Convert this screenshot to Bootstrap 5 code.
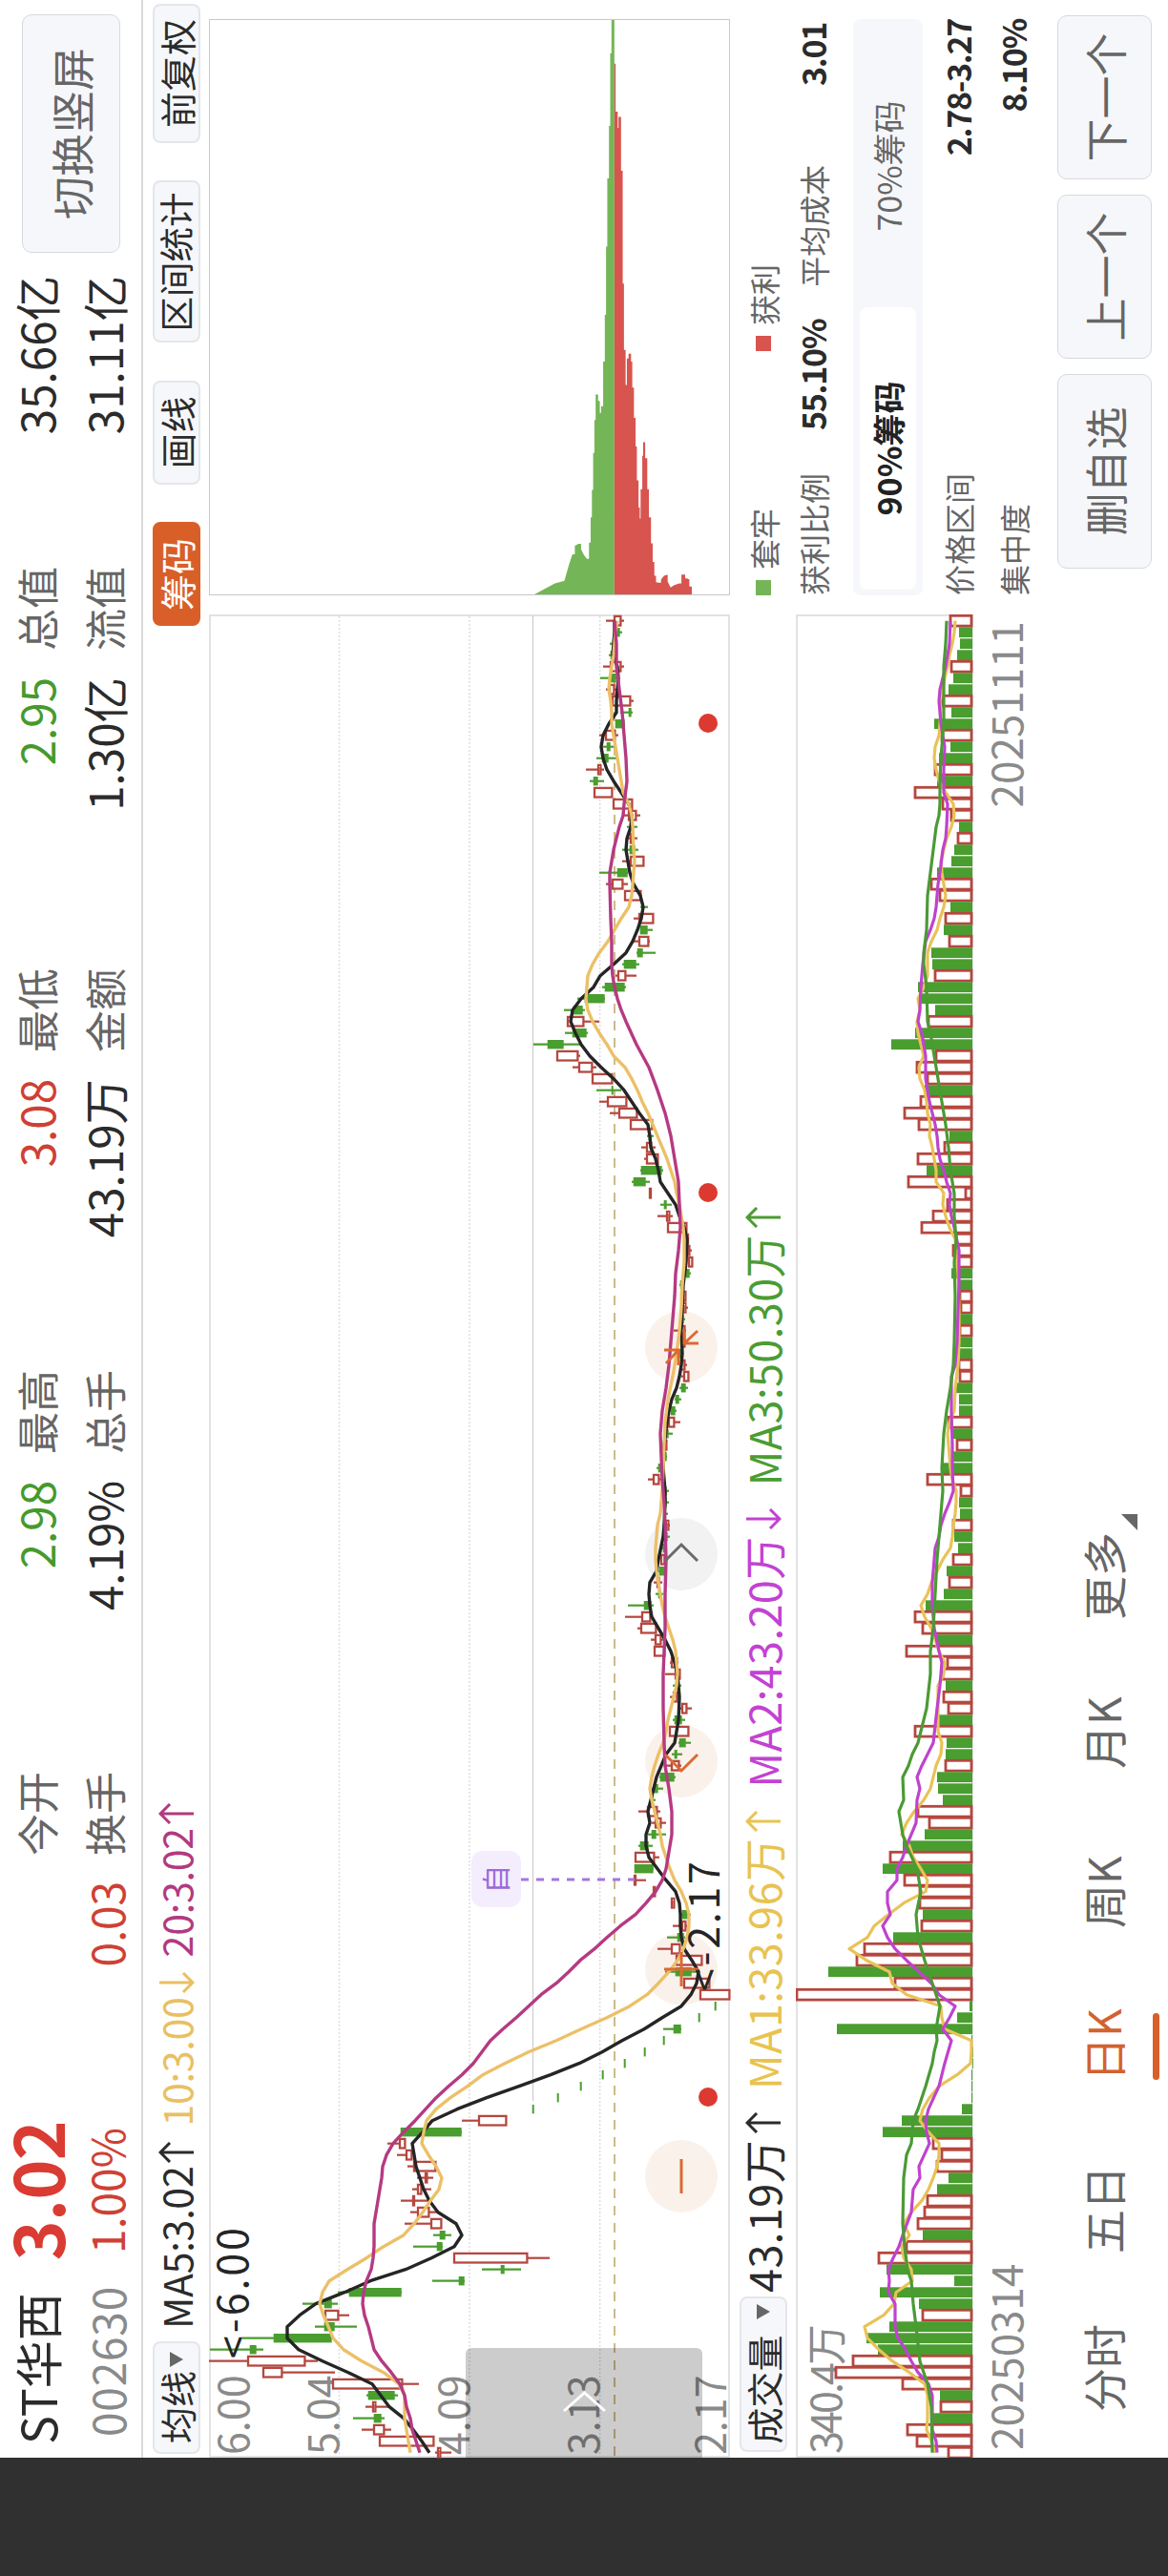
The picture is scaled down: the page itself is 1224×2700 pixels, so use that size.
<!DOCTYPE html>
<html lang="zh-CN">
  <head>
    <meta charset="UTF-8" />
    <meta name="viewport" content="width=device-width, initial-scale=1.0" />
    <title>ST华西 002630 - 日K</title>
    <link
      href="https://cdn.jsdelivr.net/npm/bootstrap@5.3.0/dist/css/bootstrap.min.css"
      rel="stylesheet"
    />
    <style>
      body {
        font-family: "Noto Sans CJK SC", "Noto Sans", sans-serif;
        color: #2b2b2b;
        background-color: #fff;
      }
      /* phone held sideways: the landscape page is turned a quarter to the left */
      .phone {
        width: 1224px;
        height: 2700px;
        overflow: hidden;
      }
      .landscape {
        width: 2700px;
        height: 1224px;
        transform-origin: 0 0;
        transform: rotate(-90deg) translateX(-2700px);
        background-color: #fff;
        line-height: 1;
      }
      .cutout {
        width: 124px;
        background-color: #303030;
      }
      .page {
        width: 2576px;
      }
      .up {
        color: #cf4034;
      }
      .down {
        color: #469a2c;
      }
      .muted {
        color: #666;
      }

      /* header */
      .quote {
        height: 150px;
        padding-top: 2px;
        border-bottom: 2px solid #dadada;
      }
      .quote-line {
        height: 71px;
      }
      .stock-id {
        width: 183px;
      }
      .stock-name {
        font-size: 50px;
        padding-left: 14px;
      }
      .stock-code {
        font-size: 46px;
        padding: 6px 0 0 22px;
        letter-spacing: 0.8px;
        color: #8a8a8a;
      }
      .price-col {
        width: 194px;
        text-align: center;
      }
      .price {
        font-size: 71px;
        font-weight: 700;
        color: #da3b32;
        letter-spacing: -0.6px;
      }
      .pct {
        font-size: 46px;
        padding-top: 5px;
      }
      .change-col {
        width: 230px;
        padding-right: 3px;
        text-align: right;
      }
      .stat {
        width: 421px;
        padding: 0 4px 0 24px;
        font-size: 44px;
      }
      .stat .num {
        font-size: 47.5px;
      }
      .soft-btn {
        background-color: #f6f7fa;
        border: 1px solid #d6d9dd;
        border-radius: 10px;
        color: #666;
        font-size: 45px;
        line-height: 1;
        padding: 0;
      }
      .rotate-btn {
        width: 250px;
        height: 103px;
        margin: 21px 0 0 20px;
      }

      /* toolbar */
      .tools {
        height: 69px;
        padding: 0 4px;
      }
      .pill {
        height: 50px;
        font-size: 38px;
        line-height: 1;
        padding: 0;
        border: 2px solid #e3e6ea;
        border-radius: 8px;
        background-color: #f6f7fa;
        color: #2b2b2b;
      }
      .pill.active {
        background-color: #d85f27;
        border-color: #d85f27;
        color: #fff;
      }
      .w-ma { width: 118px; }
      .w-2 { width: 109px; }
      .w-3 { width: 146px; }
      .w-4 { width: 170px; font-size: 36.5px; }
      .w-vol { width: 163px; }
      .ma-text {
        font-size: 41px;
        letter-spacing: -0.2px;
        margin-left: 13px;
      }
      .c5 { color: #2b2b2b; }
      .c10 { color: #e9bf62; }
      .c20 { color: #b23a80; }
      .v1 { color: #e8c350; }
      .v2 { color: #c242d2; }
      .v3 { color: #4b9c33; }
      .caret {
        width: 16px;
        height: 20px;
      }
      .arrow {
        width: 22px;
        height: 38px;
      }

      /* charts */
      .left-col {
        width: 1932px;
      }
      .right-col {
        width: 604px;
        margin-left: 20px;
      }
      .k-chart {
        height: 546px;
        overflow: visible;
      }
      .vol-head {
        height: 69px;
        padding-left: 6px;
      }
      .vol-text {
        font-size: 45px;
        letter-spacing: 0.45px;
      }
      .vol-text .arrow {
        margin-left: 7px;
      }
      .dates {
        padding: 11px 7px 0 8px;
        font-size: 44px;
        color: #8a8a8a;
      }

      /* chips panel */
      .chips {
        border: 1px solid #c8c8c8;
        height: 546px;
      }
      .side-text {
        font-size: 32px;
        color: #666;
      }
      .side-num {
        font-size: 34px;
        font-weight: 700;
        color: #2b2b2b;
        letter-spacing: -1.3px;
      }
      .dot-sq {
        width: 16px;
        height: 16px;
        margin-right: 11px;
      }
      .seg {
        height: 73px;
        padding: 7px 6px;
        background-color: #f6f7fa;
        border-radius: 8px;
        font-size: 34px;
        color: #666;
      }
      .seg-on {
        background-color: #fff;
        border-radius: 8px;
        color: #222;
        font-weight: 700;
      }

      /* bottom bar */
      .bottom-bar {
        height: 116px;
        padding: 0 16px 0 48px;
      }
      .period {
        font-size: 46px;
        color: #666;
        height: 107px;
        padding-bottom: 13px;
      }
      .period.on {
        color: #d2622f;
      }
      .period.on::after {
        content: "";
        position: absolute;
        left: 1px;
        right: 5px;
        bottom: 0;
        height: 7px;
        border-radius: 4px;
        background-color: #d85f27;
      }
      .more-tri {
        position: absolute;
        right: -19px;
        bottom: 23px;
      }
      .nav-btn {
        height: 99px;
        width: 172px;
      }
      .nav-btn.wide {
        width: 204px;
      }
    </style>
  </head>
  <body>
    <svg class="d-none">
      <symbol id="arrow-up" viewBox="0 0 22 38">
        <path d="M11 37V2M1 12L11 2l10 10" fill="none" stroke="currentColor" stroke-width="3" />
      </symbol>
      <symbol id="arrow-down" viewBox="0 0 22 38">
        <path d="M11 1v35M1 26l10 10 10-10" fill="none" stroke="currentColor" stroke-width="3" />
      </symbol>
      <symbol id="caret" viewBox="0 0 16 14">
        <path d="M0 0h16L8 14z" fill="#666" />
      </symbol>
    </svg>

    <div class="phone">
      <div class="landscape d-flex">
        <div class="cutout flex-shrink-0"></div>
        <div class="page d-flex flex-column">
          <header class="quote d-flex flex-shrink-0">
            <div>
              <div class="quote-line d-flex align-items-center">
                <div class="stock-id stock-name text-nowrap">ST华西</div>
                <div class="price-col price">3.02</div>
                <div class="change-col"></div>
              </div>
              <div class="quote-line d-flex align-items-center">
                <div class="stock-id stock-code">002630</div>
                <div class="price-col pct up">1.00%</div>
                <div class="change-col pct up">0.03</div>
              </div>
            </div>
            <div id="stats" class="d-flex"></div>
            <button class="btn soft-btn rotate-btn">切换竖屏</button>
          </header>

          <div class="tools d-flex align-items-center flex-shrink-0">
            <button class="btn pill w-ma d-flex align-items-center justify-content-center gap-1">
              均线<svg class="caret"><use href="#caret" /></svg>
            </button>
            <div class="ma-text d-flex align-items-center text-nowrap">
              <span class="c5 d-flex align-items-center">MA5:3.02<svg class="arrow ms-1"><use href="#arrow-up" /></svg></span>
              <span class="c10 d-flex align-items-center ms-3">10:3.00<svg class="arrow ms-1"><use href="#arrow-down" /></svg></span>
              <span class="c20 d-flex align-items-center ms-3">20:3.02<svg class="arrow ms-1"><use href="#arrow-up" /></svg></span>
            </div>
            <div class="d-flex ms-auto" style="gap: 39.5px">
              <button class="btn pill active w-2">筹码</button>
              <button class="btn pill w-2">画线</button>
              <button class="btn pill w-4">区间统计</button>
              <button class="btn pill w-3">前复权</button>
            </div>
          </div>

          <div class="d-flex flex-grow-1">
            <div class="left-col">
              <svg id="kChart" class="k-chart d-block" width="1932" height="546"></svg>
              <div class="vol-head d-flex align-items-center">
                <button class="btn pill w-vol d-flex align-items-center justify-content-center gap-3">
                  成交量<svg class="caret"><use href="#caret" /></svg>
                </button>
                <div class="vol-text d-flex align-items-center text-nowrap">
                  <span class="d-flex align-items-center ms-1">43.19万<svg class="arrow"><use href="#arrow-up" /></svg></span>
                  <span class="v1 d-flex align-items-center ms-4">MA1:33.96万<svg class="arrow"><use href="#arrow-up" /></svg></span>
                  <span class="v2 d-flex align-items-center ms-4">MA2:43.20万<svg class="arrow"><use href="#arrow-down" /></svg></span>
                  <span class="v3 d-flex align-items-center ms-4">MA3:50.30万<svg class="arrow"><use href="#arrow-up" /></svg></span>
                </div>
              </div>
              <svg id="vChart" class="d-block" width="1932" height="186"></svg>
              <div class="dates d-flex justify-content-between">
                <span>20250314</span><span>20251111</span>
              </div>
            </div>

            <div class="right-col">
              <div class="chips">
                <svg id="chipChart" class="d-block" width="602" height="544"></svg>
              </div>
              <div class="side-text row gx-0 align-items-center" style="height: 70px">
                <div class="d-flex align-items-center" style="width: 256px">
                  <span class="dot-sq" style="background: #74b657"></span>套牢
                </div>
                <div class="col d-flex align-items-center">
                  <span class="dot-sq" style="background: #d8544e"></span>获利
                </div>
              </div>
              <div class="side-text d-flex align-items-center" style="height: 34px">
                <span>获利比例</span>
                <span class="side-num" style="margin-left: 45px">55.10%</span>
                <span style="margin-left: 34px">平均成本</span>
                <span class="side-num ms-auto me-1">3.01</span>
              </div>
              <div class="seg d-flex" style="margin-top: 25px">
                <div class="seg-on w-50 d-flex align-items-center justify-content-center">90%筹码</div>
                <div class="w-50 d-flex align-items-center justify-content-center">70%筹码</div>
              </div>
              <div class="side-text d-flex justify-content-between align-items-center" style="height: 58px; margin-top: 8px">
                <span>价格区间</span><span class="side-num">2.78-3.27</span>
              </div>
              <div class="side-text d-flex justify-content-between align-items-center" style="height: 58px">
                <span>集中度</span><span class="side-num">8.10%</span>
              </div>
            </div>
          </div>

          <nav class="bottom-bar d-flex flex-shrink-0">
            <div class="period d-flex align-items-center" style="width: 166px">分时</div>
            <div class="period d-flex align-items-center" style="width: 181px">五日</div>
            <div style="width: 160px">
              <div class="period on d-inline-flex align-items-center position-relative">日K</div>
            </div>
            <div class="period d-flex align-items-center" style="width: 167px">周K</div>
            <div class="period d-flex align-items-center" style="width: 156px">月K</div>
            <div class="period d-flex align-items-center position-relative">
              更多
              <svg class="more-tri" width="17" height="17"><path d="M17 0v17H0z" fill="#666" /></svg>
            </div>
            <div class="ms-auto d-flex gap-3">
              <button class="btn soft-btn nav-btn wide">删自选</button>
              <button class="btn soft-btn nav-btn">上一个</button>
              <button class="btn soft-btn nav-btn">下一个</button>
            </div>
          </nav>
        </div>
      </div>
    </div>

    <script src="https://cdn.jsdelivr.net/npm/bootstrap@5.3.0/dist/js/bootstrap.bundle.min.js"></script>
    <script>
      const GREEN = "#4a9d2f";
      const RED = "#b5473f";

      // header columns: two label/value pairs each
      const stats = [
        [["今开", "2.98", "down"], ["换手", "4.19%", ""]],
        [["最高", "3.08", "up"], ["总手", "43.19万", ""]],
        [["最低", "2.95", "down"], ["金额", "1.30亿", ""]],
        [["总值", "35.66亿", ""], ["流值", "31.11亿", ""]],
      ];
      document.getElementById("stats").innerHTML = stats
        .map(
          (col) => `<div>${col
            .map(
              ([label, value, cls]) => `
            <div class="quote-line stat d-flex justify-content-between align-items-center">
              <span class="muted">${label}</span><span class="num ${cls}">${value}</span>
            </div>`
            )
            .join("")}</div>`
        )
        .join("");

      // candles, newest first: colour, wick top, body top, body bottom, wick bottom
      const candles = `r635,643,651,654 g643,647,650,652 g639,642,645,646 g638,640,644,646 r632,639,651,654
        g629,640,646,648 r635,638,644,647 r640,641,661,664 g650,659,662,663 g645,645,655,655
        r628,634,645,648 g632,636,640,645 g625,631,638,646 r614,626,630,633 g618,622,627,633
        r622,622,642,642 r642,642,663,663 r653,658,667,671 g657,661,663,668 r658,660,664,668
        g652,660,666,669 r652,660,675,675 g628,647,658,658 r635,641,653,658 r654,654,672,672
        g671,673,675,679 r664,669,685,685 g671,671,679,684 r664,669,680,681 g667,668,674,687
        g652,654,667,670 r645,647,656,667 g631,634,655,656 g605,613,634,634 g591,601,611,613
        r594,594,612,628 g592,600,615,616 g559,574,591,608 r583,583,606,608 r600,606,621,625
        r620,620,642,642 g625,641,642,651 r628,636,657,657 r639,648,668,668 r660,660,684,684
        g678,680,682,685 r672,677,683,687 r675,677,690,690 g671,672,694,695 g662,664,677,681
        r680,680,682,682 g692,696,699,704 r689,698,702,705 r699,699,720,720 r718,719,721,722
        r717,720,723,725 r721,721,726,726 g718,719,723,724 g712,713,715,717 r713,713,719,719
        r714,715,719,721 g713,714,717,718 r706,713,718,719 r714,714,718,718 g710,710,714,715
        r712,713,718,720 r714,716,722,722 g712,714,719,721 g707,708,712,714 g702,703,708,709
        r698,700,707,713 g696,697,701,705 r696,696,699,699 g696,696,699,699 g688,690,693,694
        r679,684,691,693 g695,697,699,701 g695,697,699,701 g695,696,698,700 r695,697,701,702
        g697,698,700,702 g694,695,697,698 r692,692,697,697 g690,691,697,697 r685,688,691,694
        g687,690,692,695 g658,675,683,685 r655,672,682,682 r668,671,688,688 r682,686,693,695
        r685,685,697,697 r702,703,710,711 r697,707,713,713 g705,708,712,714 r702,705,710,711
        r713,714,720,725 g705,707,715,718 r701,701,722,722 g711,712,719,724 g704,707,710,715
        r697,703,712,714 g691,692,707,708 g683,685,690,695 g681,682,685,687 r669,678,689,692
        r683,686,693,698 g679,683,688,698 g669,671,680,684 r665,665,686,691 g665,665,685,685
        r664,664,666,677 r684,684,687,687 r703,703,707,707 g714,715,721,724 r705,714,719,720
        g699,710,717,718 r689,703,713,713 r708,708,736,736 g697,708,725,732 r716,716,744,744
        r733,733,765,765 g749,749,750,750 g732,732,733,733 g695,706,714,714 g695,695,696,696
        g675,675,676,676 g654,654,655,655 g631,631,632,632 g608,608,609,609 g584,584,585,585
        g558,558,559,559 r484,501,531,531 g420,420,484,484 r406,418,425,425 r416,425,432,432
        r427,433,457,458 r437,445,448,454 r432,437,442,452 r420,432,434,450 r430,437,450,460
        r424,451,463,463 g454,461,467,473 g433,458,464,464 r475,475,553,576 g505,525,529,546
        g453,481,487,487 g354,366,421,421 g317,340,348,354 r340,340,355,366 g330,340,351,374
        g254,287,348,348 g220,262,269,276 r219,259,320,333 r275,275,296,351 r348,348,422,439
        g384,386,414,417 r383,390,394,407 g370,392,400,403 r379,391,403,410 r397,397,455,455
        r456,458,462,473`
        .trim()
        .split(/\s+/)
        .map((s) => ({ up: s[0] === "r", v: s.slice(1).split(",").map(Number) }));

      // moving averages, "candle index:position"
      const ma5 = "0:644 1:644 2:643 3:642 4:647 5:648 7:646 8:646 9:638 10:632 11:630 12:632 13:636 14:643 15:651 16:659 17:662 18:661 19:657 20:656 21:658 22:660 23:664 24:671 25:674 26:672 27:668 28:663 29:656 30:643 31:629 32:622 33:609 34:600 35:598 36:603 37:609 38:618 39:630 40:643 41:654 42:662 43:670 44:679 45:681 46:682 47:687 48:690 49:692 50:700 51:708 52:712 53:717 54:720 56:719 58:716 60:715 62:714 64:715 65:714 66:712 67:709 68:704 69:701 70:699 72:696 74:695 76:697 77:697 79:696 80:695 82:690 83:688 84:681 85:680 86:681 87:683 88:690 89:697 90:703 91:707 92:710 94:712 96:711 97:709 98:707 99:698 100:693 101:688 102:685 103:682 104:679 105:681 106:677 107:677 108:680 109:689 110:698 111:708 112:712 113:713 114:713 115:714 116:717 117:725 118:732 119:730 120:724 121:714 122:694 123:675 124:652 125:631 126:607 127:577 128:544 129:510 130:479 131:453 132:443 133:432 134:434 135:436 136:440 137:444 138:450 139:459 140:478 141:484 142:476 143:452 144:425 145:388 146:361 147:331 148:314 149:301 150:301 151:313 152:338 153:365 154:390 155:399 156:408 157:423 158:433 159:442 160:450";
      const ma10 = "0:647 1:645 3:643 5:639 6:638 7:640 8:641 9:641 10:643 11:645 12:647 13:649 14:651 15:653 16:659 17:662 18:663 20:664 21:665 22:664 23:663 24:662 25:659 26:651 27:644 28:637 29:628 30:621 31:616 32:615 33:614 34:616 35:621 36:628 37:636 38:643 39:655 40:662 41:668 42:673 43:679 44:684 45:689 46:694 47:699 48:703 49:707 50:709 51:712 52:714 53:716 54:717 56:717 58:715 60:714 62:712 64:709 66:705 68:700 70:697 72:696 74:695 76:694 78:692 79:689 80:688 81:687 82:687 83:688 84:690 85:692 86:694 87:697 88:701 89:705 90:708 91:709 92:710 93:709 94:706 95:703 96:700 97:698 98:695 99:690 100:686 101:683 102:681 103:683 104:686 105:689 106:692 107:694 108:698 109:702 110:707 111:714 112:719 113:722 114:722 115:720 116:716 117:710 118:701 119:690 120:678 121:660 122:636 123:609 124:583 125:554 126:529 127:506 128:490 129:472 130:457 131:447 132:444 133:442 134:449 135:457 136:463 137:460 138:451 139:443 140:434 141:423 142:402 143:384 144:364 145:345 146:338 147:335 148:339 149:344 150:349 151:360 152:379 153:402 154:418 155:424 157:424 159:428 160:430";
      const ma20 = "0:644 2:646 4:646 6:649 8:652 10:654 12:656 14:657 16:654 17:653 18:649 19:646 20:643 21:641 22:639 23:639 26:640 28:641 30:641 31:642 32:644 33:647 34:651 35:656 37:667 39:680 41:689 43:697 45:703 47:707 49:711 51:712 53:713 55:711 57:708 59:707 61:705 63:703 65:701 67:698 69:694 71:692 73:693 75:694 77:696 79:697 82:698 85:697 88:697 90:696 92:695 95:695 98:696 100:697 102:701 104:704 106:704 108:700 109:698 110:694 111:687 112:677 113:666 114:650 115:636 116:623 117:608 118:596 119:583 120:567 121:554 122:541 123:527 124:514 125:505 126:496 127:484 128:470 129:457 130:446 131:435 132:423 133:412 134:405 135:401 136:400 138:396 140:392 142:392 143:391 144:389 145:384 146:381 147:380 148:382 149:386 150:389 151:392 152:400 153:410 154:419 155:424 156:426 157:430 158:432 159:436 160:440";

      // volumes, newest first
      const volumes = "r24 g14 g13 g16 r23 g20 g25 r33 g22 g40 r33 g23 g35 r40 g37 r61 r32 r23 g14 r16 g19 g22 g37 r44 r35 g23 r29 g30 r25 g43 g42 r40 g57 g53 g39 r47 g60 g85 r39 r59 r48 g50 r55 r72 r57 g24 r30 r58 g48 r68 r8 r27 r42 r54 r18 r21 r17 g22 g15 r14 r13 g14 r14 g14 g13 r15 r14 g17 g14 g14 r26 g21 r17 g21 g33 r48 r13 g14 g13 r21 g19 g15 r21 g27 r25 g30 g49 r61 r53 g38 r70 r27 r32 g28 r31 r26 g35 r61 g27 g28 r29 g37 g36 g31 r58 r46 g50 g73 r87 g94 r72 r56 r56 g52 r54 g83 r114 r122 g151 r82 r185 g3 g16 g142 g1 g0 g0 g1 g1 g1 g11 g74 g94 r42 r33 r38 g25 g37 r48 r51 r58 g52 r70 r99 g90 g19 g97 g56 r53 g87 g111 g99 r126 r144 r74 g34 r34 g41 r69 r59 r26".split(" ");
      const vma1 = "0:18 1:19 2:21 3:24 4:26 5:29 6:31 7:34 8:33 9:34 10:35 11:39 12:40 13:38 14:35 15:28 16:20 17:19 18:22 19:27 20:30 21:33 22:32 23:30 24:28 25:30 26:34 27:37 28:43 29:47 30:47 31:47 32:51 33:57 34:55 35:58 36:57 37:54 38:51 39:56 40:55 41:50 42:48 43:47 44:44 45:45 46:42 47:40 48:38 49:38 50:30 51:31 52:28 53:24 54:18 55:17 57:15 60:14 63:14 65:15 67:18 69:19 70:24 71:26 72:25 73:24 74:23 75:21 76:17 77:17 78:18 79:20 80:21 81:23 82:31 83:37 84:43 85:47 86:54 87:50 88:43 89:39 90:35 91:29 92:30 93:36 95:36 97:36 98:32 99:33 100:38 101:41 102:44 103:51 104:61 105:69 106:74 107:66 108:62 109:54 110:47 111:49 112:72 113:88 114:103 115:110 116:129 117:111 118:87 119:84 120:69 121:33 122:32 123:29 124:1 125:1 126:2 127:16 128:35 129:45 130:52 131:55 132:46 133:35 134:35 135:37 136:41 137:46 138:53 139:64 140:72 141:66 142:74 143:72 144:64 145:63 146:80 147:82 148:93 149:113 150:110 151:98 152:84 153:66 154:50 155:47 157:47 158:48 159:43 160:39";
      const vma2 = "0:23 2:24 4:28 5:31 6:34 7:35 9:33 11:29 13:30 15:30 16:26 18:27 19:28 20:31 22:34 23:36 25:38 26:40 27:44 28:49 30:52 32:54 34:55 35:57 36:53 37:51 38:49 40:49 42:45 44:39 45:37 46:36 47:34 48:30 49:27 50:23 51:24 52:22 53:19 55:14 58:14 60:15 63:16 65:18 66:22 69:22 72:21 74:21 76:20 77:24 78:29 79:33 80:35 81:39 84:42 86:42 88:40 90:35 91:32 93:34 95:37 98:41 99:47 100:53 101:58 102:55 103:58 105:59 106:64 107:69 108:73 109:79 110:79 111:89 112:89 113:86 114:94 115:89 116:81 117:69 118:56 119:43 120:35 121:18 122:24 123:31 124:22 126:29 128:35 130:46 131:49 132:48 133:45 135:56 136:55 137:62 139:64 141:73 142:77 143:83 144:88 145:87 146:88 147:81 149:81 150:78 151:70 152:64 153:57 154:46 155:42 157:42 158:42 159:38 160:37";
      const vma3 = "0:27 2:28 4:30 6:30 9:30 12:33 14:34 16:34 17:35 18:38 20:41 22:44 24:47 27:48 29:51 30:51 32:48 35:47 36:44 38:40 40:36 42:32 44:28 46:25 48:23 50:19 52:19 54:17 56:19 59:18 63:19 65:20 67:23 69:27 71:30 74:32 76:31 79:34 82:37 85:39 88:41 90:44 92:44 95:48 97:54 98:57 99:63 100:67 101:73 103:72 104:77 106:73 107:69 109:58 111:54 113:59 115:57 117:50 119:42 120:38 121:34 123:38 124:37 125:40 126:42 128:49 130:57 131:62 132:63 133:64 134:69 136:72 140:73 142:71 144:68 145:64 147:62 149:59 152:55 154:47 156:43 160:42";

      const TOP = 219;
      const BAR = 10.8;
      const cx = (k) => 1925.3 - 12 * k;
      const line = (series, toY, color, width) =>
        `<polyline fill="none" stroke="${color}" stroke-width="${width}" stroke-linejoin="round" points="${series
          .split(" ")
          .map((p) => p.split(":").map(Number))
          .map(([k, v]) => `${cx(k).toFixed(1)},${toY(v)}`)
          .join(" ")}"/>`;

      function drawCandle({ up, v }, k) {
        const [wt, bt, bb, wb] = v.map((n) => n - TOP);
        const x = cx(k);
        const h = Math.max(bb - bt, 2);
        if (!up) {
          return `<path d="M${x} ${wt}V${wb}" stroke="${GREEN}" stroke-width="2.2"/>
            <rect x="${x - 4.7}" y="${bt - 0.3}" width="9.4" height="${h}" fill="${GREEN}"/>`;
        }
        return `<path d="M${x} ${wt}V${bt}M${x} ${bb}V${wb}" stroke="${RED}" stroke-width="2.2"/>
          <rect x="${x - 4.8}" y="${bt + 1}" width="9.6" height="${Math.max(h - 1.6, 1)}" fill="#fff" stroke="${RED}" stroke-width="2.3"/>`;
      }

      const hint = (x, bg) => `<circle cx="${x}" cy="495" r="38" fill="${bg}"/>`;

      const grid = [136.5, 273, 409.7]
        .map((y) => `<path d="M0 ${y}H1932" stroke="#dcdcdc" stroke-width="1.4" stroke-dasharray="2 2"/>`)
        .join("");
      const priceLabels = [["6.00", 42], ["5.04", 136], ["4.09", 273], ["3.13", 409], ["2.17", 542]]
        .map(([t, y]) => `<text x="3" y="${y}" fill="#8a8a8a">${t}</text>`)
        .join("");

      document.getElementById("kChart").innerHTML = `
        <rect x="1" y="1" width="1930" height="544" fill="none" stroke="#e2e2e2" stroke-width="2"/>
        ${grid}
        <path d="M374 339.5H1931" stroke="#ccc" stroke-width="1.2"/>
        <path d="M2 425H1930" stroke="#cfb98a" stroke-width="2" stroke-dasharray="10 8"/>
        ${[295, 512, 730, 1164].map((x) => hint(x, "#fbf1eb")).join("")}
        ${hint(947, "#f2f2f2")}
        <g font-size="43">${priceLabels}</g>
        <g>${candles.map(drawCandle).join("")}</g>
        <path d="M606 327V446" stroke="#a477e0" stroke-width="3" stroke-dasharray="8 8"/>
        ${line(ma5, (v) => v - TOP, "#252525", 3.4)}
        ${line(ma10, (v) => v - TOP, "#ecc068", 3.4)}
        ${line(ma20, (v) => v - TOP, "#b53a82", 3.4)}
        <g fill="none" stroke="#db6a31" stroke-width="3">
          <path d="M277 495h36M494 495h36M512 477v36"/>
          <path d="M737 478l-17 17 17 17"/>
          <path d="M1168 513v-15h15M1168 498l13 14M1161 477v15h-16M1161 492l-14-13"/>
        </g>
        <path d="M940 478l17 17-17 17" fill="none" stroke="#6a6a6a" stroke-width="3"/>
        <g fill="#dc3a30">
          <circle cx="378" cy="523" r="10"/><circle cx="1326" cy="523" r="10"/><circle cx="1818" cy="523" r="10"/>
        </g>
        <g font-size="43" fill="#252525">
          <text x="104" y="41" textLength="137">&lt;-6.00</text>
          <text x="489" y="535" textLength="136">&lt;-2.17</text>
        </g>
        <rect x="577" y="275" width="59" height="52" rx="12" fill="#f4edfd"/>
        <text x="606.5" y="312" font-size="30" fill="#9b6bdc" text-anchor="middle">自</text>
        <path d="M0 269h109a6 6 0 0 1 6 6v236a6 6 0 0 1-6 6H0z" fill="#000" fill-opacity=".2"/>
        <path d="M49 372l19 21.5-19 21.5" fill="none" stroke="#fff" stroke-width="3"/>`;

      const volBars = volumes
        .map((s, k) => {
          const h = Number(s.slice(1));
          const x = cx(k);
          return s[0] === "g"
            ? `<rect x="${x - BAR / 2}" y="${185 - h}" width="${BAR}" height="${Math.max(h, 0.8)}" fill="${GREEN}"/>`
            : `<rect x="${x - 5.4}" y="${186 - h}" width="10.8" height="${h - 2}" fill="#fff" stroke="${RED}" stroke-width="2.8"/>`;
        })
        .join("");
      document.getElementById("vChart").innerHTML = `
        <rect x="1" y="1" width="1930" height="184" fill="none" stroke="#e2e2e2" stroke-width="2"/>
        <text x="4" y="48" font-size="43" fill="#8a8a8a" textLength="136">340.4万</text>
        ${volBars}
        ${line(vma1, (v) => 185 - v, "#e9c257", 3.2)}
        ${line(vma2, (v) => 185 - v, "#bf43cd", 3.2)}
        ${line(vma3, (v) => 185 - v, "#4b9a35", 3.2)}`;

      // chip distribution: price offset, bar length
      const trapped = [[46, 0], [95, 28], [118, 35], [128, 73], [137, 103], [143, 125], [152, 130], [158, 116], [165, 101], [172, 91], [177, 133], [181, 198], [184, 268], [187, 363], [190, 448], [193, 513], [199, 497], [203, 466], [206, 483], [211, 598], [215, 718], [218, 893], [221, 1068], [225, 1203], [228, 1390], [231, 1480], [238, 1480]];
      const profit = [[238, 1363], [241, 1240], [246, 1198], [248, 1226], [254, 1088], [258, 798], [261, 628], [265, 538], [268, 606], [272, 618], [278, 598], [281, 531], [285, 453], [289, 380], [292, 293], [296, 223], [299, 195], [301, 270], [305, 356], [307, 391], [312, 350], [317, 270], [321, 198], [326, 131], [330, 83], [334, 48], [338, 31], [345, 30], [350, 38], [357, 48], [364, 50], [366, 33], [373, 18], [382, 24], [394, 28], [399, 51], [404, 51], [408, 41], [414, 39], [418, 20], [424, 10], [424, 0]];
      const chipY = (p) => 320 + p / 2.292;
      const chipX = (n) => n / 2.45;
      function chipArea(rows, color) {
        let d = `M0 ${chipY(rows[0][0])}`;
        rows.forEach(([p, n], i) => {
          // wide gaps slope, narrow ones step like single bars
          const step = i && p - rows[i - 1][0] < 7;
          d += step ? `V${chipY(p)}H${chipX(n)}` : `L${chipX(n)} ${chipY(p)}`;
        });
        return `<path d="${d}V${chipY(rows[rows.length - 1][0])}H0Z" fill="${color}"/>`;
      }
      document.getElementById("chipChart").innerHTML =
        chipArea(trapped, "#74b657") + chipArea(profit, "#d8544e");
    </script>
  </body>
</html>
